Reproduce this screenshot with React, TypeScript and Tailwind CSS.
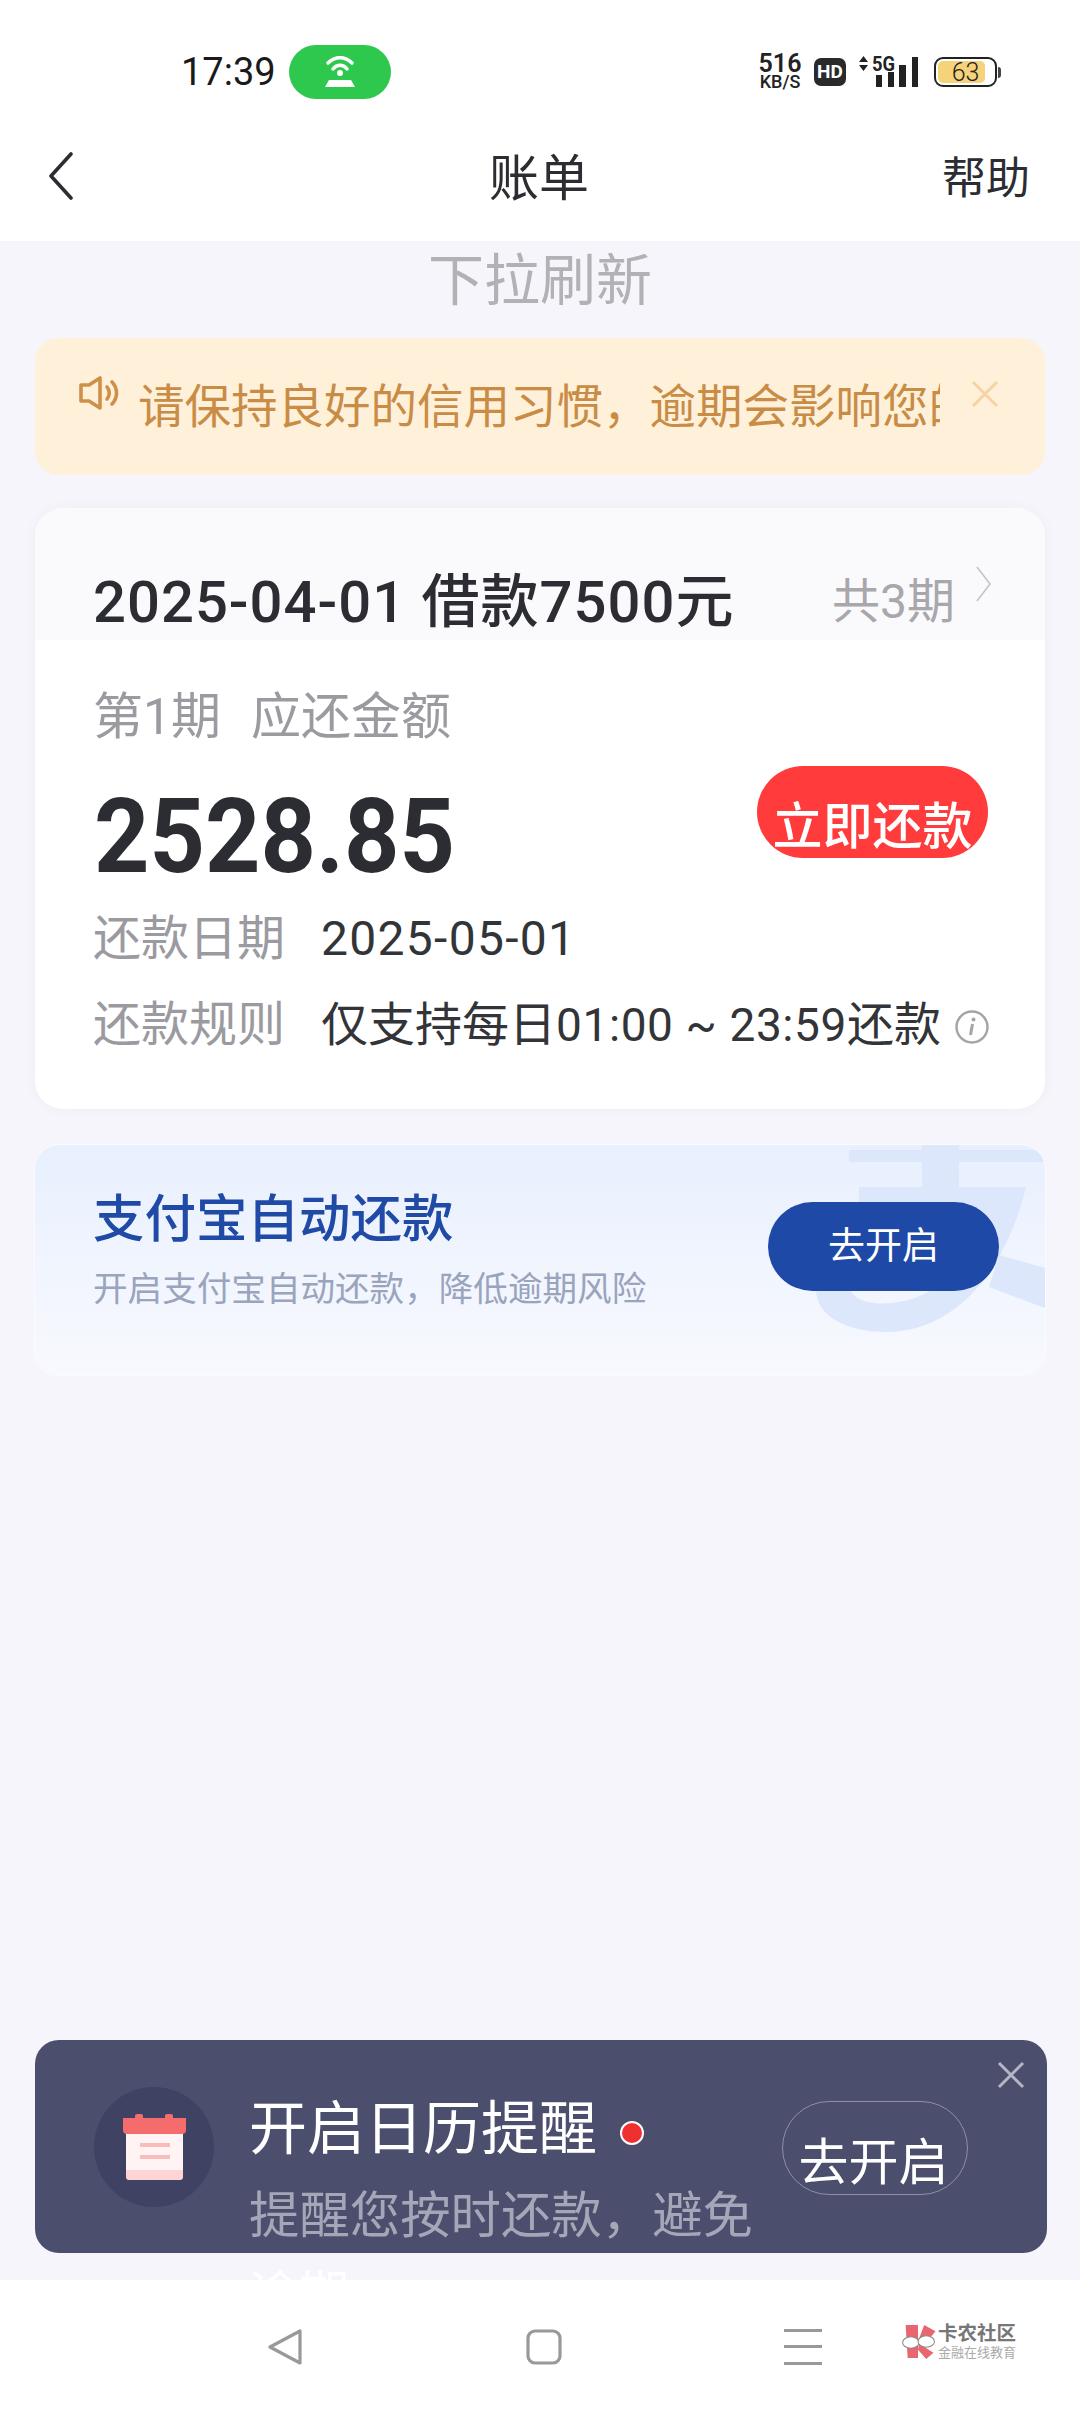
import React from "react";

const StatusIcons = () => (
  <div className="flex items-center">
    <div className="flex flex-col items-center w-[42px] text-[#222]">
      <span className="text-[25px] leading-[20px] font-semibold">516</span>
      <span className="text-[18px] leading-[16px] font-medium">KB/S</span>
    </div>
    <div className="ml-[13px] w-[32px] h-[28px] rounded-[7px] bg-[#2a2a2a] text-white text-[19px] font-bold flex items-center justify-center">
      HD
    </div>
    <svg className="ml-[13px]" width="60" height="34" viewBox="0 0 60 34">
      <path d="M4.5 1 L9 7 H0 Z M4.5 16 L9 10 H0 Z" fill="#222" />
      <text x="13" y="16" fontSize="20" fontWeight="700" fill="#222" fontFamily="Roboto" textLength="23" lengthAdjust="spacingAndGlyphs">5G</text>
      <rect x="17" y="20" width="6" height="12" fill="#222" />
      <rect x="29" y="17" width="6" height="15" fill="#222" />
      <rect x="40" y="10" width="7" height="22" fill="#222" />
      <rect x="53" y="2" width="6" height="30" fill="#222" />
    </svg>
    <div className="ml-[15px] relative w-[63px] h-[30px] rounded-[9px] border-2 border-[#222] p-[2px]">
      <div className="h-full w-[47px] rounded-[5px] bg-[#f6d27a]" />
      <span className="absolute inset-0 flex items-center justify-center text-[25px] leading-none text-[#222] font-light">63</span>
    </div>
    <div className="ml-[1px] w-[3px] h-[11px] bg-[#444] rounded-r-sm" />
  </div>
);

const Wifi = () => (
  <svg width="36" height="36" viewBox="0 0 36 36" fill="none">
    <path d="M6 9 C13 2 23 2 30 9" stroke="white" strokeWidth="3.5" strokeLinecap="round" />
    <path d="M11 15 C15 10 21 10 25 15" stroke="white" strokeWidth="3.5" strokeLinecap="round" />
    <circle cx="18" cy="19" r="3" fill="white" />
    <path d="M7 26 H29 L33 33 H3 Z" fill="white" />
  </svg>
);

const Speaker = () => (
  <svg width="40" height="34" viewBox="0 0 40 34" fill="none" stroke="#cd9049" strokeWidth="3.6" strokeLinejoin="round" strokeLinecap="round">
    <path d="M2 9 H10 L21 2 V32 L10 25 H2 Z" />
    <path d="M28 11 C31 14 31 20 28 23" />
    <path d="M33 6 C39 12 39 22 33 28" />
  </svg>
);

const CloseX = ({ color, size }: { color: string; size: number }) => (
  <svg width={size} height={size} viewBox="0 0 28 28" fill="none" stroke={color} strokeWidth="3">
    <path d="M2 2 L26 26 M26 2 L2 26" />
  </svg>
);

const Calendar = () => (
  <svg width="63" height="66" viewBox="0 0 63 66">
    <rect x="12" y="0" width="8" height="8" rx="2" fill="#f56c6c" />
    <rect x="42" y="0" width="8" height="8" rx="2" fill="#f56c6c" />
    <rect x="3" y="18" width="57" height="48" rx="3" fill="#ffd4d4" />
    <rect x="3" y="18" width="57" height="38" fill="#fff3f3" />
    <path d="M0 4 H63 V16 Q63 20 59 20 H4 Q0 20 0 16 Z" fill="#f56c6c" />
    <rect x="17" y="29" width="30" height="4" fill="#f9bcbc" />
    <rect x="17" y="41" width="30" height="4" fill="#f9bcbc" />
  </svg>
);

const LogoMark = () => (
  <svg width="36" height="36" viewBox="0 0 34 35">
    <path d="M5 1 H17 V33 H7 Z" fill="#e8666f" />
    <path d="M17 17 L23 1 L34 7 L25 18 Z" fill="#e8666f" />
    <path d="M18 19 L32 28 L25 34 L17 25 Z" fill="#e8666f" />
    <ellipse cx="10" cy="18" rx="8" ry="5.5" fill="#fff" stroke="#888" strokeWidth="1" />
    <ellipse cx="25" cy="17" rx="8" ry="5.5" fill="#fff" stroke="#888" strokeWidth="1" />
  </svg>
);

export default function App() {
  return (
    <div className="w-[1080px] h-[2412px] overflow-hidden flex flex-col bg-[#f5f5fb] font-[Roboto,'Noto_Sans_CJK_SC',sans-serif]">
      <header className="bg-white h-[241px] shrink-0">
        <div className="pt-[45px] pl-[181px] pr-[79px] flex items-center justify-between h-[99px]">
          <div className="flex items-center">
            <span className="text-[38px] leading-none text-[#1a1a1a] w-[93px]">17:39</span>
            <div className="ml-[15px] w-[102px] h-[54px] rounded-full bg-[#2fc84f] flex items-center justify-center">
              <Wifi />
            </div>
          </div>
          <StatusIcons />
        </div>
        <div className="mt-[44px] h-[72px] px-[48px] flex items-center">
          <div className="flex-1 -mt-[6px]">
            <svg width="26" height="48" viewBox="0 0 26 48" fill="none" stroke="#2c2d33" strokeWidth="3.6" strokeLinecap="round" strokeLinejoin="round">
              <path d="M23 2 L3 24 L23 46" />
            </svg>
          </div>
          <span className="text-[50px] leading-[72px] text-[#2c2d33]">账单</span>
          <span className="flex-1 text-right pr-[2px] text-[44px] leading-[72px] text-[#2c2d33]">帮助</span>
        </div>
      </header>

      <main className="flex-1 flex flex-col px-[35px]">
        <div className="h-[80px] flex items-center justify-center text-[56px] leading-none text-[#b2b2b6]">下拉刷新</div>

        <div className="mt-[17px] h-[137px] rounded-[24px] bg-[#fff0da] flex items-center pl-[44px]">
          <div className="self-start mt-[38px] w-[59px] shrink-0">
            <Speaker />
          </div>
          <div className="w-[802px] overflow-hidden whitespace-nowrap text-[46.5px] leading-[60px] text-[#c98c45]">
            请保持良好的信用习惯，逾期会影响您的征信
          </div>
          <div className="self-start mt-[42px] ml-[31px]">
            <CloseX color="#f5d3a3" size={28} />
          </div>
        </div>

        <section className="mt-[33px] bg-white rounded-[28px] overflow-hidden h-[601px] shadow-[0_0_12px_rgba(120,130,170,0.06)]">
          <div className="h-[132px] bg-[#fafafd] pt-[64px] pl-[58px] pr-[53px] flex items-start">
            <span className="text-[58px] leading-[60px] font-medium text-[#2c2d33] whitespace-nowrap tracking-[1px]">2025-04-01 借款7500元</span>
            <span className="ml-auto text-[48px] leading-[60px] text-[#a8a8ac]">共3期</span>
            <svg className="ml-[20px] -mt-[7px] shrink-0" width="17" height="38" viewBox="0 0 17 38" fill="none" stroke="#c4c4c8" strokeWidth="1.6">
              <path d="M2 2 L15 19 L2 36" />
            </svg>
          </div>
          <div className="pl-[58px] pr-[57px]">
            <div className="mt-[47px] h-[60px] flex items-center text-[50px] leading-[60px] text-[#9a9aa0] whitespace-nowrap">
              第1期<span className="ml-[30px]">应还金额</span>
            </div>
            <div className="mt-[19px] h-[120px] flex items-start justify-between">
              <span className="mt-[19px] ml-[1px] origin-left scale-x-[0.93] text-[104px] leading-[104px] font-bold text-[#2c2d33]">2528.85</span>
              <div className="w-[231px] h-[92px] rounded-full bg-[#ff3b3b] flex items-center justify-center pt-[29px] text-[50px] leading-[60px] font-medium text-white whitespace-nowrap">
                立即还款
              </div>
            </div>
            <div className="mt-[23px] h-[60px] flex items-center">
              <span className="w-[228px] text-[48px] leading-[60px] text-[#9a9aa0]">还款日期</span>
              <span className="text-[48px] leading-[60px] tracking-[1.3px] text-[#333438]">2025-05-01</span>
            </div>
            <div className="mt-[26px] h-[60px] flex items-center whitespace-nowrap">
              <span className="w-[228px] shrink-0 text-[48px] leading-[60px] text-[#9a9aa0]">还款规则</span>
              <span className="text-[47px] leading-[60px] text-[#333438]">仅支持每日<span className="text-[46px] tracking-[0.6px]">01:00 ~ 23:59</span>还款</span>
              <svg className="ml-[14px] mt-[4px] shrink-0" width="34" height="34" viewBox="0 0 34 34" fill="none">
                <circle cx="17" cy="17" r="15.5" stroke="#a4a4a8" strokeWidth="2.4" />
                <circle cx="18.5" cy="9.5" r="2" fill="#a4a4a8" />
                <path d="M17.5 14 L15.5 25" stroke="#a4a4a8" strokeWidth="3" />
              </svg>
            </div>
          </div>
        </section>

        <section className="mt-[36px] h-[230px] relative overflow-hidden rounded-[24px] bg-gradient-to-b from-[#e8f0fe] to-[#f8f9fe] shadow-[0_0_0_1px_#fafbfe] pl-[58px] flex items-center">
          <svg className="absolute inset-0" width="1010" height="230" viewBox="0 0 1010 230" fill="#dde7fc">
            <path d="M814 5 H1010 V17 H814 Z" />
            <path d="M887 0 H924 V45 H887 Z" />
            <path d="M824 42 H991 C975 110 930 187 851 187 C810 187 781 170 781 145 H815 C820 155 835 160 855 158 C905 155 940 110 950 70 H824 Z" />
            <path d="M964 110 L1010 123 V163 L954 142 Z" />
          </svg>
          <div className="relative -mt-[19px]">
            <div className="text-[51.5px] leading-[60px] font-medium text-[#1f4aa5] whitespace-nowrap">支付宝自动还款</div>
            <div className="mt-[17px] text-[34.6px] leading-[44px] text-[#9aa4bd] whitespace-nowrap">开启支付宝自动还款，降低逾期风险</div>
          </div>
          <div className="absolute left-[733px] top-[57px] w-[231px] h-[89px] rounded-full bg-[#1f49a6] flex items-center justify-center text-[37px] text-white">
            去开启
          </div>
        </section>

        <section className="mt-auto mb-[27px] mr-[-2px] h-[213px] rounded-[24px] bg-[#4b4e6d] relative pl-[59px] flex items-start">
          <div className="mt-[47px] w-[120px] h-[120px] rounded-full bg-[#3f4263] flex items-center justify-center shrink-0">
            <Calendar />
          </div>
          <div className="ml-[35px] mt-[59px] w-[520px]">
            <div className="flex items-center h-[60px]">
              <span className="text-[58px] leading-[60px] text-white whitespace-nowrap">开启日历提醒</span>
              <span className="ml-[23px] mt-[8px] w-[24px] h-[24px] rounded-full bg-[#f03030] border-2 border-white" />
            </div>
            <div className="mt-[27px] text-[50.4px] leading-[60px] text-[#a5a6b8] whitespace-nowrap">提醒您按时还款，避免</div>
            <div className="mt-[19px] text-[50px] leading-[60px] text-white whitespace-nowrap">逾期</div>
          </div>
          <div className="absolute left-[747px] top-[61px] w-[186px] h-[94px] rounded-full border border-[#8f90a5] flex items-center justify-center pt-[30px] pr-[3px] text-[50px] leading-[60px] text-white whitespace-nowrap">
            去开启
          </div>
          <div className="absolute left-[962px] top-[21px]">
            <CloseX color="#b5b6c5" size={28} />
          </div>
        </section>
      </main>

      <nav className="relative z-10 h-[132px] shrink-0 bg-white flex items-start pt-[49px] pl-[267px]">
        <svg width="36" height="36" viewBox="0 0 36 36" fill="none" stroke="#999" strokeWidth="3.2" strokeLinejoin="round">
          <path d="M33 2 V34 L3 18 Z" />
        </svg>
        <svg className="ml-[223px]" width="36" height="36" viewBox="0 0 36 36" fill="none" stroke="#999" strokeWidth="3.2">
          <rect x="2" y="2" width="32" height="32" rx="7" />
        </svg>
        <svg className="ml-[222px]" width="38" height="36" viewBox="0 0 38 36" fill="#999">
          <rect x="0" y="0" width="38" height="3" />
          <rect x="0" y="16" width="38" height="3" />
          <rect x="0" y="33" width="38" height="3" />
        </svg>
        <div className="ml-[78px] -mt-[5px] flex items-center">
          <LogoMark />
          <div className="ml-[2px] flex flex-col items-start">
            <span className="text-[19.5px] leading-[20px] font-bold text-[#777] whitespace-nowrap">卡农社区</span>
            <span className="mt-[2px] text-[13px] leading-[14px] text-[#aaa] whitespace-nowrap">金融在线教育</span>
          </div>
        </div>
      </nav>
    </div>
  );
}
